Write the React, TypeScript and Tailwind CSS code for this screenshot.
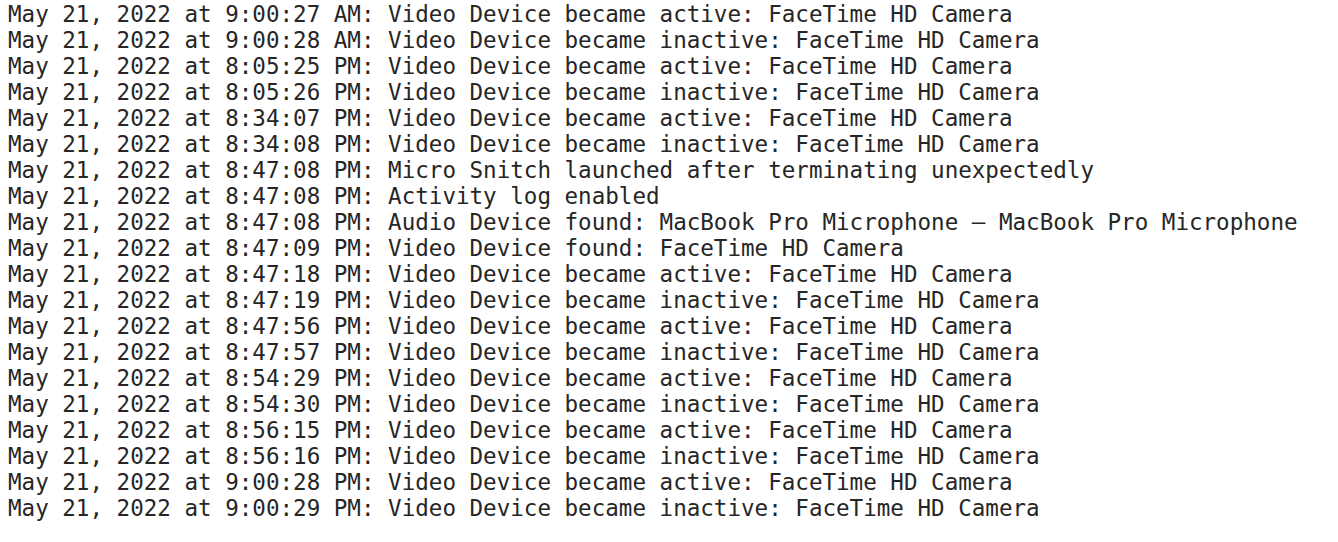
const lines = [
  "May 21, 2022 at 9:00:27 AM: Video Device became active: FaceTime HD Camera",
  "May 21, 2022 at 9:00:28 AM: Video Device became inactive: FaceTime HD Camera",
  "May 21, 2022 at 8:05:25 PM: Video Device became active: FaceTime HD Camera",
  "May 21, 2022 at 8:05:26 PM: Video Device became inactive: FaceTime HD Camera",
  "May 21, 2022 at 8:34:07 PM: Video Device became active: FaceTime HD Camera",
  "May 21, 2022 at 8:34:08 PM: Video Device became inactive: FaceTime HD Camera",
  "May 21, 2022 at 8:47:08 PM: Micro Snitch launched after terminating unexpectedly",
  "May 21, 2022 at 8:47:08 PM: Activity log enabled",
  "May 21, 2022 at 8:47:08 PM: Audio Device found: MacBook Pro Microphone — MacBook Pro Microphone",
  "May 21, 2022 at 8:47:09 PM: Video Device found: FaceTime HD Camera",
  "May 21, 2022 at 8:47:18 PM: Video Device became active: FaceTime HD Camera",
  "May 21, 2022 at 8:47:19 PM: Video Device became inactive: FaceTime HD Camera",
  "May 21, 2022 at 8:47:56 PM: Video Device became active: FaceTime HD Camera",
  "May 21, 2022 at 8:47:57 PM: Video Device became inactive: FaceTime HD Camera",
  "May 21, 2022 at 8:54:29 PM: Video Device became active: FaceTime HD Camera",
  "May 21, 2022 at 8:54:30 PM: Video Device became inactive: FaceTime HD Camera",
  "May 21, 2022 at 8:56:15 PM: Video Device became active: FaceTime HD Camera",
  "May 21, 2022 at 8:56:16 PM: Video Device became inactive: FaceTime HD Camera",
  "May 21, 2022 at 9:00:28 PM: Video Device became active: FaceTime HD Camera",
  "May 21, 2022 at 9:00:29 PM: Video Device became inactive: FaceTime HD Camera",
];

export default function App() {
  return (
    <div className="w-[1338px] h-[542px] bg-white overflow-hidden pl-[8px] pt-[1px] font-['DejaVu_Sans_Mono',monospace] text-[22.55px] leading-[26px] text-[#262626]">
      {lines.map((l, i) => (
        <div key={i} className="whitespace-pre">
          {l}
        </div>
      ))}
    </div>
  );
}
